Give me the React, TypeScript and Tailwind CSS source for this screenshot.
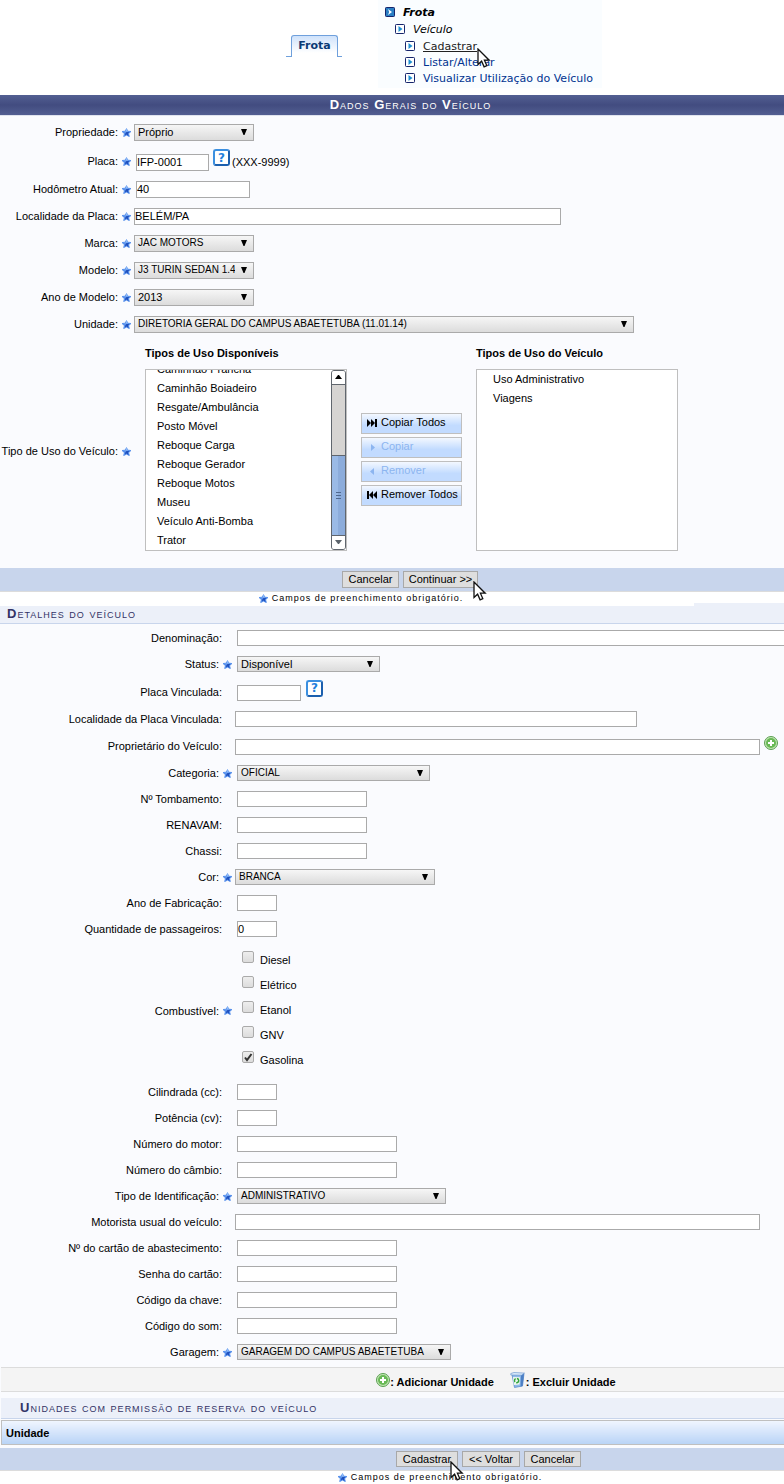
import { useState, type ReactNode } from "react"

const DISPONIVEIS = [
  "Caminhão Prancha",
  "Caminhão Boiadeiro",
  "Resgate/Ambulância",
  "Posto Móvel",
  "Reboque Carga",
  "Reboque Gerador",
  "Reboque Motos",
  "Museu",
  "Veículo Anti-Bomba",
  "Trator",
]

const COMBUSTIVEIS = ["Diesel", "Elétrico", "Etanol", "GNV", "Gasolina"]

const TITLE = "text-[13px] tracking-[1px] [font-variant-caps:small-caps]"

function Star() {
  return (
    <svg viewBox="0 0 16 16" className="h-[9px] w-[9px] shrink-0">
      <path d="M8 0l3 5 5 .5v1.500L12.500 10l1.500 5-1.500 1L8 13.500 3.500 16 2 15l1.500-5L0 7V5.500L5 5z" fill="#5b93ec" />
      <path d="M8 1l2.500 5H4L2 6.500h4l-1 4z" fill="#93bdf8" />
      <path d="M8 7h5l-2.500 3 1.500 4.500L8 11.500l-3 2 1-4z" fill="#1f50bd" />
    </svg>
  )
}

function Cursor({ className }: { className: string }) {
  return (
    <svg viewBox="0 0 14 20" className={`pointer-events-none absolute z-10 h-5 w-3.5 ${className}`}>
      <path d="M1 1v15.500l3.600-3.300 2.500 5.600 2.700-1.200-2.400-5.400h4.800z" fill="#fff" stroke="#111" strokeWidth="1.300" />
    </svg>
  )
}

function MenuIcon({ filled = false }: { filled?: boolean }) {
  return (
    <svg viewBox="0 0 10 10" className="mb-0.5 h-2.5 w-2.5 shrink-0">
      <rect x="0.5" y="0.5" width="9" height="9" rx="0.8" fill={filled ? "#2a7fc4" : "#fff"} stroke="#15246b" />
      {filled ? (
        <path d="M3 2l4 3-4 3 1.200-3z" fill="#fff" />
      ) : (
        <path d="M3.500 2v6L7.500 5z" fill="#1d8fd1" />
      )}
    </svg>
  )
}

function HelpIcon() {
  return (
    <button
      type="button"
      aria-label="Ajuda"
      className="flex h-[17px] w-[17px] shrink-0 items-center justify-center rounded-[3px] border-2 border-t-[#3b8fe0] border-r-[#1b5fae] border-b-[#1b5fae] border-l-[#3b8fe0] bg-white font-['DejaVu_Sans',sans-serif] text-[12px] leading-[12px] font-bold text-[#2380dc]"
    >
      ?
    </button>
  )
}

function PlusIcon() {
  return (
    <svg viewBox="0 0 14 14" className="h-3.5 w-3.5 shrink-0">
      <circle cx="7" cy="7" r="6.500" fill="#c4e6b5" stroke="#5a9f52" />
      <circle cx="7" cy="7" r="5" fill="#68b955" />
      <path d="M7 4v6M4 7h6" stroke="#fff" strokeWidth="2" />
    </svg>
  )
}

function BinIcon() {
  return (
    <svg viewBox="0 0 16 16" className="h-4 w-4 shrink-0">
      <path d="M2 2.500l12-1-1.500 12.500-8 1.500z" fill="#8fb9e8" stroke="#5b8ccb" strokeWidth="0.8" />
      <path d="M11 3l3-1-1.500 12-2 .5z" fill="#4c7fc4" />
      <path d="M.8 1.500L4 .5l10.500.6L11.500 3.200.8 3z" fill="#dcebfa" stroke="#5b8ccb" strokeWidth="0.6" />
      <path d="M3 5l7 .3-.5 7.200-5.700.5z" fill="#eef7ee" />
      <circle cx="6.600" cy="8.600" r="2.100" fill="none" stroke="#2fa43a" strokeWidth="1.400" strokeDasharray="3.400 1.200" />
    </svg>
  )
}

interface RowProps {
  id: string
  label: string
  required?: boolean
  wide?: boolean
  height?: string
  children: ReactNode
}

function Row({ id, label, required = false, wide = false, height, children }: RowProps) {
  return (
    <div className={`flex items-center ${height ?? (wide ? "h-[26px]" : "h-[27px]")}`}>
      <label
        htmlFor={id}
        className={`shrink-0 text-right whitespace-nowrap ${wide ? "w-[222px]" : "w-[118px] pb-px"} ${wide && required ? "pr-[3px]" : ""}`}
      >
        {label}:
      </label>
      <span className={`flex shrink-0 ${wide ? "w-[13px] pl-px" : "w-4 pl-1"}`}>
        {required && <Star />}
      </span>
      {children}
    </div>
  )
}

function Text({ id, className, value = "" }: { id: string; className: string; value?: string }) {
  return (
    <input
      id={id}
      type="text"
      defaultValue={value}
      className={`border border-[#aaa] bg-white px-0 pt-0 text-[11px] leading-[14px] text-black outline-none ${className}`}
    />
  )
}

interface ComboProps {
  id: string
  value: string
  className: string
  caps?: boolean
}

function Combo({ id, value, className, caps = false }: ComboProps) {
  return (
    <span className={`relative flex ${className}`}>
      <select
        id={id}
        className={`h-full w-full appearance-none border border-[#aaa] bg-linear-to-b from-[#f6f6f6] to-[#dcdcdc] pt-0 pr-[18px] pb-px pl-[3px] leading-[14px] text-black outline-none ${caps ? "text-[10px]" : "text-[11px]"}`}
      >
        <option>{value}</option>
      </select>
      <svg viewBox="0 0 6 6" className="pointer-events-none absolute top-[5px] right-[7px] h-1.5 w-1.5">
        <path d="M0 0h6L3.500 6h-1z" fill="#000" />
      </svg>
    </span>
  )
}

function PlainButton({ className = "", children }: { className?: string; children: ReactNode }) {
  return (
    <button
      type="button"
      className={`relative border border-[#a8a8a8] bg-[#dedede] pb-px text-[11px] leading-[14px] whitespace-nowrap ${className}`}
    >
      {children}
    </button>
  )
}

function MoveButton({ icon, disabled = false, children }: { icon: string; disabled?: boolean; children: ReactNode }) {
  return (
    <button
      type="button"
      disabled={disabled}
      className={`flex h-[21px] w-[101px] items-center gap-1 border border-[#bfbfbf] bg-linear-to-b from-[#f3f8ff] to-[#c2dbff] to-60% pb-0.5 pl-[5px] text-[11px] whitespace-nowrap ${disabled ? "text-[#8cb5f0]" : "text-black"}`}
    >
      <svg viewBox="0 0 10 8" className="mt-0.5 h-2 w-2.5 shrink-0">
        <path d={icon} fill="currentColor" />
      </svg>
      {children}
    </button>
  )
}

function RequiredNote() {
  return (
    <p className="flex items-center gap-1 text-[9px] leading-3 tracking-[1px]">
      <Star />
      Campos de preenchimento obrigatório.
    </p>
  )
}

export default function App() {
  const [combustiveis, setCombustiveis] = useState(["Gasolina"])

  const toggle = (nome: string) =>
    setCombustiveis((atual) => (atual.includes(nome) ? atual.filter((c) => c !== nome) : [...atual, nome]))

  return (
    <main className="overflow-x-hidden bg-white font-['Liberation_Sans',Arial,sans-serif] text-[11px] leading-[14px] text-black">
      {/* Tab and menu */}
      <header className="flex h-[95px] items-start pl-[286px] font-['DejaVu_Sans',Verdana,sans-serif]">
        <div className="mt-[35px] flex items-end">
          <span className="w-[5px] border-b border-[#6fa0dc]" />
          <a
            href="#frota"
            className="flex h-[22px] w-[47px] items-center justify-center rounded-t-[3px] border border-b-0 border-[#6fa0dc] bg-linear-to-b from-[#cfe2fb] to-white to-80% pb-0.5 text-[11px] font-bold text-[#0b3a75]"
          >
            Frota
          </a>
          <span className="w-1 border-b border-[#6fa0dc]" />
        </div>
        <nav className="ml-[36px] flex h-[88px] w-[224px] flex-col bg-[#fafdff] pt-[5px] pl-[7px] text-[11px] leading-4 whitespace-nowrap">
          <div className="flex items-center gap-2 font-bold italic">
            <MenuIcon filled />
            Frota
          </div>
          <div className="flex h-[18px] items-center gap-2 pl-2.5 italic">
            <MenuIcon />
            Veículo
          </div>
          <a href="#cadastrar" className="relative flex items-center gap-2 pl-5 text-[#222] underline">
            <MenuIcon />
            Cadastrar
            <Cursor className="top-[9px] left-[92px]" />
          </a>
          <a href="#listar" className="flex items-center gap-2 pl-5 text-[#003390]">
            <MenuIcon />
            Listar/Alterar
          </a>
          <a href="#visualizar" className="flex items-center gap-2 pl-5 text-[#003390]">
            <MenuIcon />
            Visualizar Utilização do Veículo
          </a>
        </nav>
      </header>

      {/* Dados gerais */}
      <section className="bg-[#fafbfe]">
        <h2
          className={`h-5 bg-linear-to-b from-[#535f92] via-[#424c80] to-[#525e91] pl-[37px] text-center leading-5 text-white ${TITLE}`}
        >
          <b>D</b>ados <b>G</b>erais do <b>V</b>eículo
        </h2>
        <div className="border-t border-[#dfe3ee] pt-[3px] pb-1">
          <Row id="propriedade" label="Propriedade" required>
            <Combo id="propriedade" value="Próprio" className="h-[17px] w-[120px]" />
          </Row>
          <Row id="placa" label="Placa" required height="h-[30px]">
            <div className="flex h-6 items-start">
              <Text id="placa" value="IFP-0001" className="mt-[5px] ml-0.5 h-[17px] w-[73px] pb-px" />
              <div className="mr-[2px] ml-1">
                <HelpIcon />
              </div>
              <span className="mt-1.5">(XXX-9999)</span>
            </div>
          </Row>
          <Row id="hodometro" label="Hodômetro Atual" required>
            <Text id="hodometro" value="40" className="ml-0.5 h-[17px] w-[114px] pb-px" />
          </Row>
          <Row id="localidade" label="Localidade da Placa" required>
            <Text id="localidade" value="BELÉM/PA" className="h-[17px] w-[427px] pb-px" />
          </Row>
          <Row id="marca" label="Marca" required>
            <Combo caps id="marca" value="JAC MOTORS" className="h-[17px] w-[120px]" />
          </Row>
          <Row id="modelo" label="Modelo" required>
            <Combo caps id="modelo" value="J3 TURIN SEDAN 1.4" className="h-[17px] w-[120px]" />
          </Row>
          <Row id="ano-modelo" label="Ano de Modelo" required>
            <Combo id="ano-modelo" value="2013" className="h-[17px] w-[120px]" />
          </Row>
          <Row id="unidade" label="Unidade" required>
            <Combo caps id="unidade" value="DIRETORIA GERAL DO CAMPUS ABAETETUBA (11.01.14)" className="h-[17px] w-[500px]" />
          </Row>

          <Row id="tipos-disponiveis" label="Tipo de Uso do Veículo" required height="h-[226px]">
            <div className="mb-1.5 flex items-end gap-3.5 pl-[11px]">
              <div>
                <h3 className="mb-[9px] font-bold">Tipos de Uso Disponíveis</h3>
                <div className="flex h-[182px] w-[202px] border border-[#bfbfbf] bg-white">
                  <ul id="tipos-disponiveis" role="listbox" className="flex flex-1 flex-col justify-end overflow-hidden pl-[11px]">
                    {DISPONIVEIS.map((tipo) => (
                      <li key={tipo} role="option" aria-selected={false} className="h-[19px] shrink-0 leading-[19px]">
                        {tipo}
                      </li>
                    ))}
                  </ul>
                  {/* Scrollbar */}
                  <div className="flex w-[15px] flex-col overflow-hidden rounded-[3px] border border-[#60666e] bg-[#d6d4d2]">
                    <span className="flex h-3.5 items-center justify-center border-b border-[#60666e] bg-white">
                      <svg viewBox="0 0 7 4" className="h-1 w-[7px]">
                        <path d="M3 0h1l3 4H0z" fill="#000" />
                      </svg>
                    </span>
                    <span className="mt-auto flex h-20 flex-col items-center justify-center gap-0.5 border-t border-[#60666e] bg-linear-to-r from-[#9abae6] from-50% to-[#8cacdb] to-50%">
                      <i className="h-px w-[5px] bg-[#50698f]" />
                      <i className="h-px w-[5px] bg-[#50698f]" />
                      <i className="h-px w-[5px] bg-[#50698f]" />
                    </span>
                    <span className="flex h-3.5 items-center justify-center border-t border-[#60666e] bg-white">
                      <svg viewBox="0 0 7 4" className="h-1 w-[7px]">
                        <path d="M0 0h7L4 4H3z" fill="#5c646c" />
                      </svg>
                    </span>
                  </div>
                </div>
              </div>
              <div className="mb-[45px] flex flex-col gap-[3px]">
                <MoveButton icon="M0 0l4 4V0l4 4V0h2v8H8V4L4 8V4L0 8z">Copiar Todos</MoveButton>
                <MoveButton icon="M4 1v7l4-3.500z" disabled>
                  Copiar
                </MoveButton>
                <MoveButton icon="M7 1v7L3 4.500z" disabled>
                  Remover
                </MoveButton>
                <MoveButton icon="M10 0L6 4V0L2 4V0H0v8h2V4l4 4V4l4 4z">Remover Todos</MoveButton>
              </div>
              <div>
                <h3 className="mb-[9px] font-bold">Tipos de Uso do Veículo</h3>
                <ul role="listbox" aria-label="Tipos de Uso do Veículo" className="h-[182px] w-[202px] border border-[#bfbfbf] bg-white pl-4">
                  <li role="option" aria-selected={false} className="h-[19px] leading-[19px]">
                    Uso Administrativo
                  </li>
                  <li role="option" aria-selected={false} className="h-[19px] leading-[19px]">
                    Viagens
                  </li>
                </ul>
              </div>
            </div>
          </Row>
        </div>
        <div className="flex h-6 justify-center gap-1 border-b border-[#dcdcdc] bg-[#c8d5ec] pt-[3px] pl-9">
          <PlainButton className="h-[17px] w-[57px]">Cancelar</PlainButton>
          <PlainButton className="h-[17px] w-[75px]">
            Continuar &gt;&gt;
            <Cursor className="top-[9px] left-[69px]" />
          </PlainButton>
        </div>
      </section>

      <div className="relative flex h-3.5 items-start justify-center bg-white pr-[62px]">
        <RequiredNote />
        <span className="absolute right-0 bottom-0 h-[3px] w-[90px] bg-[#ecf0f9]" />
      </div>

      {/* Detalhes */}
      <section className="bg-[#fafbfe]">
        <h2 className={`h-[18px] border-b border-[#c8d5ec] bg-[#ecf0f9] pl-[7px] leading-[15px] text-[#333366] ${TITLE}`}>
          <b>D</b>etalhes do veículo
        </h2>
        <div className="pt-px pb-0.5">
          <Row wide id="denominacao" label="Denominação">
            <Text id="denominacao" className="ml-0.5 h-4 flex-1 border-r-0" />
          </Row>
          <Row wide id="status" label="Status" required>
            <Combo id="status" value="Disponível" className="ml-0.5 h-4 w-[143px]" />
          </Row>
          <Row wide id="placa-vinculada" label="Placa Vinculada" height="h-[29px]">
            <div className="flex h-6 items-start">
              <Text id="placa-vinculada" className="mt-[5px] mr-[5px] ml-0.5 h-4 w-16" />
              <HelpIcon />
            </div>
          </Row>
          <Row wide id="localidade-vinculada" label="Localidade da Placa Vinculada">
            <Text id="localidade-vinculada" className="h-4 w-[402px]" />
          </Row>
          <Row wide id="proprietario" label="Proprietário do Veículo" height="h-7">
            <div className="flex h-5 items-start gap-1">
              <Text id="proprietario" className="mt-[3px] h-4 w-[525px]" />
              <button type="button" aria-label="Adicionar proprietário">
                <PlusIcon />
              </button>
            </div>
          </Row>
          <Row wide id="categoria" label="Categoria" required>
            <Combo caps id="categoria" value="OFICIAL" className="ml-0.5 h-4 w-[193px]" />
          </Row>
          <Row wide id="tombamento" label="Nº Tombamento">
            <Text id="tombamento" className="ml-0.5 h-4 w-[130px]" />
          </Row>
          <Row wide id="renavam" label="RENAVAM">
            <Text id="renavam" className="ml-0.5 h-4 w-[130px]" />
          </Row>
          <Row wide id="chassi" label="Chassi">
            <Text id="chassi" className="ml-0.5 h-4 w-[130px]" />
          </Row>
          <Row wide id="cor" label="Cor" required>
            <Combo caps id="cor" value="BRANCA" className="h-4 w-[200px]" />
          </Row>
          <Row wide id="ano-fabricacao" label="Ano de Fabricação">
            <Text id="ano-fabricacao" className="ml-0.5 h-4 w-10" />
          </Row>
          <Row wide id="passageiros" label="Quantidade de passageiros">
            <Text id="passageiros" value="0" className="ml-0.5 h-4 w-10" />
          </Row>
          <Row wide id="combustivel-Diesel" label="Combustível" required height="h-[137px]">
            <div className="flex flex-col pl-[7px]">
              {COMBUSTIVEIS.map((nome) => (
                <div key={nome} className="flex h-[25px] items-start gap-1.5 pt-[3px]">
                  <span className="relative flex">
                    <input
                      id={`combustivel-${nome}`}
                      type="checkbox"
                      checked={combustiveis.includes(nome)}
                      onChange={() => toggle(nome)}
                      className="h-3 w-3 appearance-none rounded-[2px] border border-[#aaa] bg-linear-to-b from-[#eee] to-[#dcdcdc]"
                    />
                    {combustiveis.includes(nome) && (
                      <svg viewBox="0 0 12 12" className="pointer-events-none absolute inset-0 h-3 w-3">
                        <path d="M3 6.500L5 9l4.500-6" fill="none" stroke="#333" strokeWidth="2" />
                      </svg>
                    )}
                  </span>
                  <label htmlFor={`combustivel-${nome}`} className="mt-0.5">
                    {nome}
                  </label>
                </div>
              ))}
            </div>
          </Row>
          <Row wide id="cilindrada" label="Cilindrada (cc)">
            <Text id="cilindrada" className="ml-0.5 h-4 w-10" />
          </Row>
          <Row wide id="potencia" label="Potência (cv)">
            <Text id="potencia" className="ml-0.5 h-4 w-10" />
          </Row>
          <Row wide id="motor" label="Número do motor">
            <Text id="motor" className="ml-0.5 h-4 w-40" />
          </Row>
          <Row wide id="cambio" label="Número do câmbio">
            <Text id="cambio" className="ml-0.5 h-4 w-40" />
          </Row>
          <Row wide id="identificacao" label="Tipo de Identificação" required>
            <Combo caps id="identificacao" value="ADMINISTRATIVO" className="ml-0.5 h-4 w-[209px]" />
          </Row>
          <Row wide id="motorista" label="Motorista usual do veículo">
            <Text id="motorista" className="h-4 w-[525px]" />
          </Row>
          <Row wide id="cartao" label="Nº do cartão de abastecimento">
            <Text id="cartao" className="ml-0.5 h-4 w-40" />
          </Row>
          <Row wide id="senha" label="Senha do cartão">
            <Text id="senha" className="ml-0.5 h-4 w-40" />
          </Row>
          <Row wide id="chave" label="Código da chave">
            <Text id="chave" className="ml-0.5 h-4 w-40" />
          </Row>
          <Row wide id="som" label="Código do som">
            <Text id="som" className="ml-0.5 h-4 w-40" />
          </Row>
          <Row wide id="garagem" label="Garagem" required>
            <Combo caps id="garagem" value="GARAGEM DO CAMPUS ABAETETUBA" className="ml-0.5 h-4 w-[214px]" />
          </Row>
        </div>

        {/* Legend */}
        <div className="ml-px flex h-[25px] items-center justify-center border-y border-[#dcdcdc] bg-[#f4f4f4] pl-[207px] font-bold">
          <PlusIcon />
          <span className="mt-1 mr-4">: Adicionar Unidade</span>
          <BinIcon />
          <span className="mt-1">: Excluir Unidade</span>
        </div>

        {/* Unidades */}
        <h2 className={`mt-1.5 ml-px h-[21px] border-b border-[#c8d5ec] bg-[#ecf0f9] pl-[19px] leading-5 text-[#333366] ${TITLE}`}>
          <b>U</b>nidades com permissão de reserva do veículo
        </h2>
        <table className="mt-px ml-px w-full border border-r-0 border-[#bfbfbf] bg-linear-to-b from-[#f1f6ff] to-[#b8d3f6]">
          <thead>
            <tr>
              <th scope="col" className="h-6 py-0 pl-1 text-left font-bold">
                Unidade
              </th>
            </tr>
          </thead>
        </table>
        <div className="mt-[3px] flex h-[23px] justify-center gap-1 border-b border-[#dcdcdc] bg-[#c8d5ec] pt-[3px] pl-[193px]">
          <PlainButton className="h-4 w-[62px]">
            Cadastrar
            <Cursor className="top-[9px] left-[53px]" />
          </PlainButton>
          <PlainButton className="h-4 w-[58px]">&lt;&lt; Voltar</PlainButton>
          <PlainButton className="h-4 w-[57px]">Cancelar</PlainButton>
        </div>
      </section>

      <footer className="flex h-[13px] items-start justify-center bg-white pl-24">
        <RequiredNote />
      </footer>
    </main>
  )
}
